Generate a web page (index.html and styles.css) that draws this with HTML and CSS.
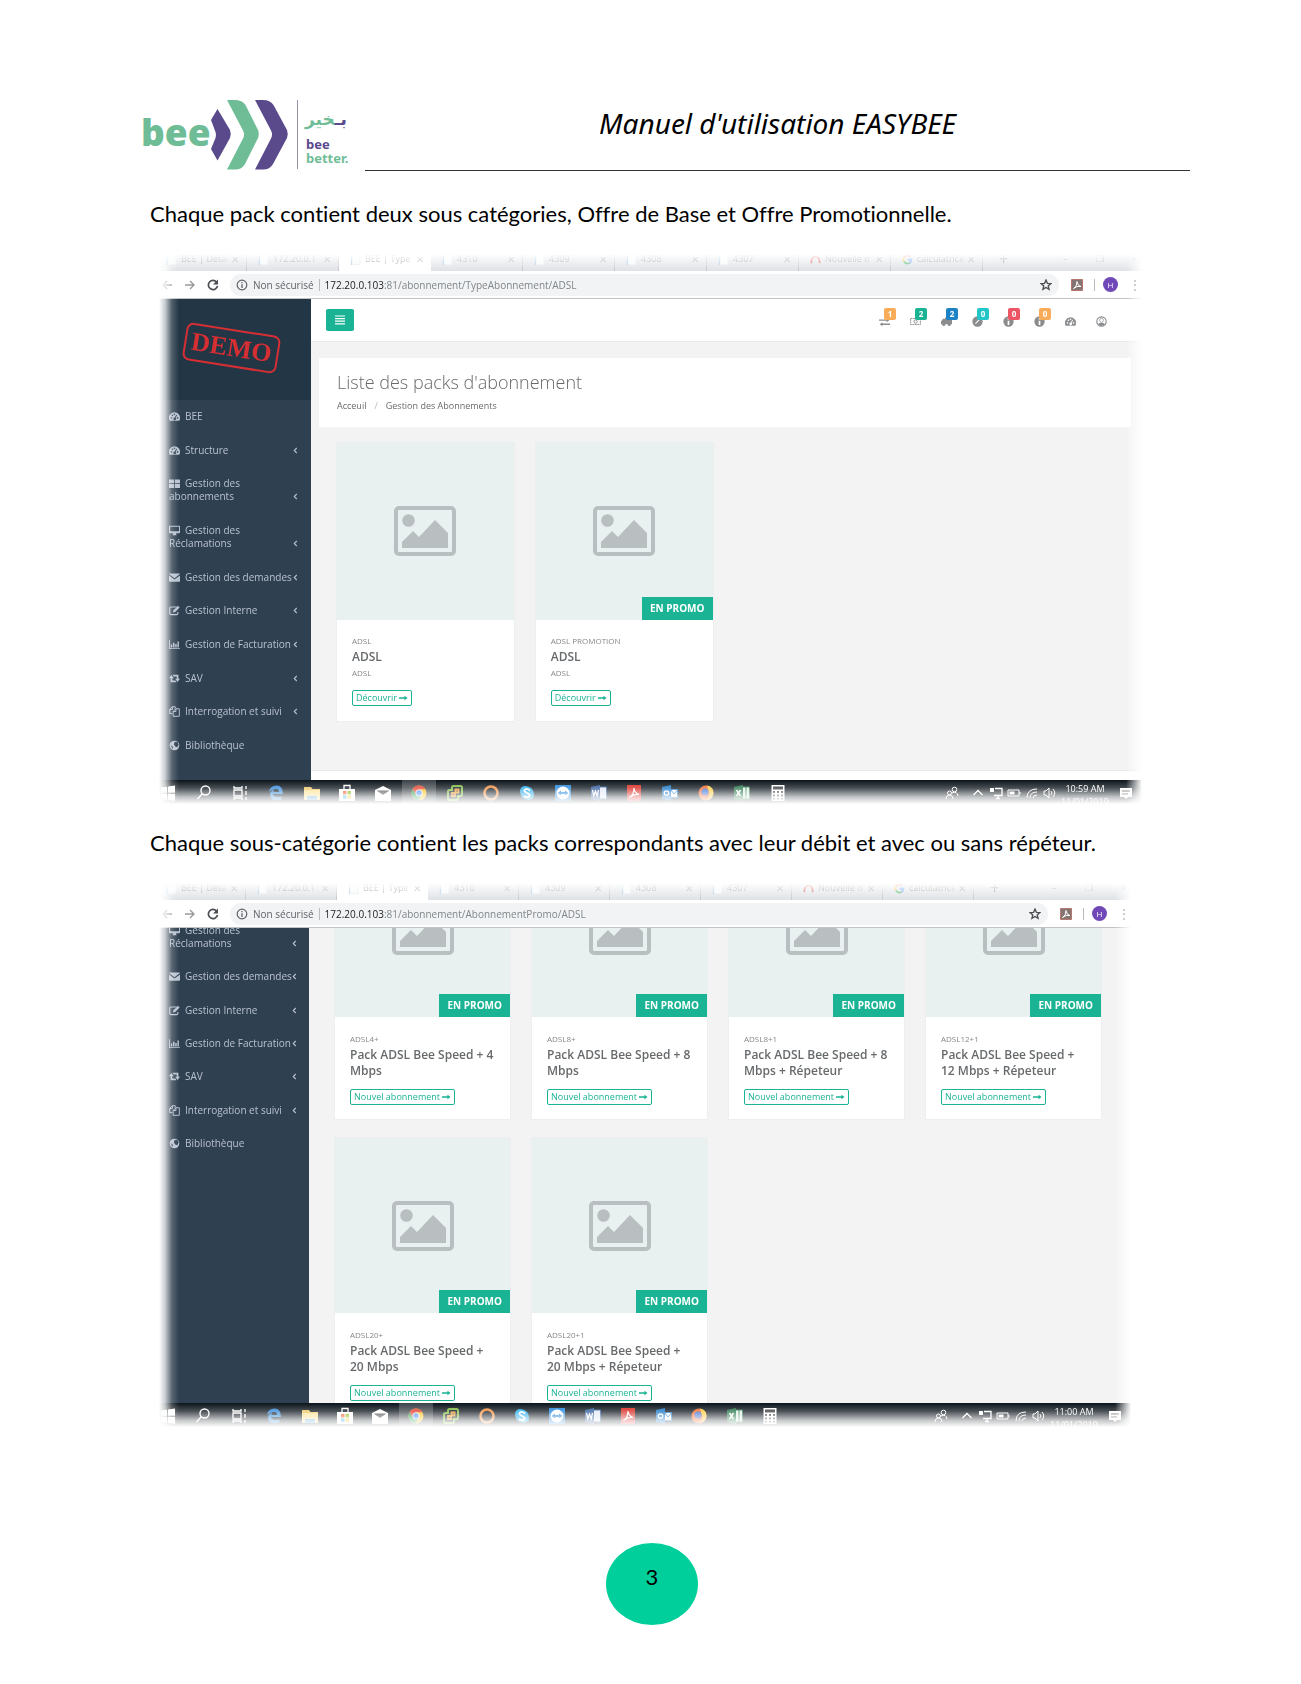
FILE: index.html
```html
<!DOCTYPE html>
<html lang="fr">
<head>
<meta charset="utf-8">
<title>Manuel d'utilisation EASYBEE</title>
<link rel="stylesheet" href="styles.css">
</head>
<body>
<svg class="sprite" aria-hidden="true">
  <symbol id="gauge" viewBox="0 0 16 16"><path fill="currentColor" d="M8 2a8 8 0 0 0-7 12h14A8 8 0 0 0 8 2z"/><g fill="var(--hole)"><circle cx="3.500" cy="10" r="1.200"/><circle cx="5" cy="6.300" r="1.200"/><circle cx="8" cy="4.800" r="1.200"/><circle cx="12.500" cy="10" r="1.200"/><path d="M10.800 5.500l1 .400L9.600 10a2 2 0 1 1-1.400-.400z"/></g></symbol>
  <symbol id="grid" viewBox="0 0 16 16"><path fill="currentColor" d="M0 2h7.400v5.600H0zM8.600 2H16v5.600H8.600zM0 8.800h7.400v5.600H0zM8.600 8.800H16v5.600H8.600z"/></symbol>
  <symbol id="desktop" viewBox="0 0 16 16"><path fill="currentColor" fill-rule="evenodd" d="M1 1h14q1 0 1 1v9q0 1-1 1h-5l1 3H5l1-3H1q-1 0-1-1V2q0-1 1-1zm.500 1.500v6.500h13V2.500z"/></symbol>
  <symbol id="mail" viewBox="0 0 16 16"><path fill="currentColor" d="M0 3q0-1 1-1h14q1 0 1 1L8 9zM0 5l8 6 8-6v8q0 1-1 1H1q-1 0-1-1z"/></symbol>
  <symbol id="edit" viewBox="0 0 16 16"><path fill="none" stroke="currentColor" stroke-width="1.600" d="M11 3H3Q1 3 1 5v7q0 2 2 2h8q2 0 2-2v-2"/><path fill="currentColor" d="M13 1l2.500 2.500L9 10l-3.500 1L6.500 7.500z"/></symbol>
  <symbol id="chart" viewBox="0 0 18 16"><path fill="currentColor" d="M0 1h1.400v13H18v1.400H0zM3 8h2.400v5H3zM6.600 5H9v8H6.600zM10.200 7h2.400v6h-2.400zM13.800 3h2.400v10h-2.400z"/></symbol>
  <symbol id="retweet" viewBox="0 0 16 16"><path fill="currentColor" d="M3.500 3l3.500 4.500H4.800V11h4.400l1.800 2.400H2.300V7.500H0zM5 2.600h8.700v5.900H16L12.500 13 9 8.500h2.200V5H6.800z"/></symbol>
  <symbol id="copy" viewBox="0 0 16 16"><g fill="none" stroke="currentColor" stroke-width="1.400"><path d="M5 11H1V5l4-4h4v3M5 1v4H1"/><path d="M10 4h5v11H6V8zM10 4v4H6"/></g></symbol>
  <symbol id="globe" viewBox="0 0 16 16"><circle cx="8" cy="8" r="7" fill="currentColor"/><path fill="var(--hole)" d="M8 3l4-.500 2 4-2 4-3-1-2-3zM2 7l4 3-1 3z"/></symbol>
  <symbol id="exchange" viewBox="0 0 16 16"><path fill="currentColor" d="M0 5h11V3l4 3-4 3V7H0zM16 11H5V9l-4 3 4 3v-2h11z"/></symbol>
  <symbol id="money" viewBox="0 0 18 16"><path fill="none" stroke="currentColor" stroke-width="1.600" stroke-dasharray="3 1" d="M1 3h16v10H1z"/><circle cx="9" cy="8" r="2.600" fill="none" stroke="currentColor" stroke-width="1.600"/></symbol>
  <symbol id="truck" viewBox="0 0 16 16"><path fill="currentColor" d="M6 2h10v10H0V8l3-4h3z"/><circle cx="4" cy="12.500" r="2.200" fill="currentColor"/><circle cx="12" cy="12.500" r="2.200" fill="currentColor"/></symbol>
  <symbol id="compass" viewBox="0 0 16 16"><circle cx="8" cy="8" r="7.500" fill="currentColor"/><path stroke="#fff" stroke-width="1.600" d="M5 11l6-6"/></symbol>
  <symbol id="info" viewBox="0 0 16 16"><circle cx="8" cy="8" r="7.500" fill="currentColor"/><path stroke="#fff" stroke-width="2.400" d="M8 3v2M8 7v6"/></symbol>
  <symbol id="user" viewBox="0 0 16 16"><circle cx="8" cy="8" r="6.800" fill="none" stroke="currentColor" stroke-width="1.600"/><circle cx="8" cy="6.200" r="2.800" fill="none" stroke="currentColor"/><path fill="currentColor" d="M3 12q2-3 5-2 3-1 5 2-5 5-10 0z"/></symbol>
  <symbol id="bars" viewBox="0 0 10 10"><path stroke="currentColor" stroke-width="1.200" d="M0 1h10M0 3.600h10M0 6.200h10M0 8.800h10"/></symbol>
  <symbol id="angle" viewBox="0 0 6 8"><path fill="none" stroke="currentColor" stroke-width="1.300" d="M4.500 1L1.500 4l3 3"/></symbol>
  <symbol id="arrow" viewBox="0 0 10 8"><path fill="currentColor" d="M0 3.300h6V1.500L9.500 4 6 6.500V4.700H0z"/></symbol>
  <symbol id="picture" viewBox="0 0 62 50"><rect x="2" y="2" width="58" height="46" rx="3" fill="none" stroke="#b9bfc0" stroke-width="4"/><circle cx="14.500" cy="14.500" r="6.300" fill="#b9bfc0"/><path fill="#b9bfc0" d="M8 42v-6l11-11 6 6 16-17 13 13v15z"/></symbol>
  <symbol id="back" viewBox="0 0 12 12"><path fill="none" stroke="#999" stroke-width="1.400" d="M11 6H2M6 2L2 6l4 4"/></symbol>
  <symbol id="forward" viewBox="0 0 12 12"><path fill="none" stroke="#999" stroke-width="1.400" d="M1 6h9M6 2l4 4-4 4"/></symbol>
  <symbol id="reload" viewBox="0 0 12 12"><path fill="none" stroke="#4a4d51" stroke-width="1.700" d="M9.800 3.400A4.600 4.600 0 1 0 10.500 7"/><path fill="#4a4d51" d="M11 .500v5H6z"/></symbol>
  <symbol id="notice" viewBox="0 0 12 12"><circle cx="6" cy="6" r="4.800" fill="none" stroke="#5f6368" stroke-width="1.200"/><path stroke="#5f6368" stroke-width="1.300" d="M6 3v1.300M6 5.300V9"/></symbol>
  <symbol id="star" viewBox="0 0 12 12"><path fill="none" stroke="#4a4d51" stroke-width="1.300" d="M6 1l1.400 3.300 3.500.300-2.700 2.300.900 3.500L6 8.500l-3.100 1.900.900-3.500L1.100 4.600l3.500-.300z"/></symbol>
  <symbol id="adobe" viewBox="0 0 12 12"><path fill="#857572" stroke="#b5786f" d="M.5.5h11v11H.5z"/><path fill="none" stroke="#fff" d="M2.500 9.500Q6 8 6 2.500 6.500 7 10 7.500 6 6.500 2.500 9.500z"/></symbol>
  <symbol id="file" viewBox="0 0 12 12"><path fill="#f4f6f8" stroke="#d5dade" d="M2 0h9v12H2z"/><path stroke="#7fb8e0" d="M1.500 2v10"/></symbol>
  <symbol id="arc" viewBox="0 0 12 12"><path fill="none" stroke="#d93025" stroke-width="1.800" d="M1.500 10Q1 3 6 3t4.500 7"/></symbol>
  <symbol id="google" viewBox="0 0 12 12"><g fill="none" stroke-width="2"><path stroke="#ea4335" d="M9 2.600Q4.500-.500 2 4"/><path stroke="#fbbc05" d="M2 4Q1 6 2 8"/><path stroke="#34a853" d="M2 8q2.500 4 6.500 1.600"/><path stroke="#4285f4" d="M8.500 9.600Q10 8 10.200 6H6"/></g></symbol>
  <symbol id="windows" viewBox="0 0 18 18"><path fill="#fff" d="M2 3.500l6-.8v6H2zM9 2.500l7-1v7.200H9zM2 9.700h6v6l-6-.8zM9 9.700h7V17l-7-1z"/></symbol>
  <symbol id="search" viewBox="0 0 18 18"><circle cx="10.500" cy="6.500" r="4.500" fill="none" stroke="#fff" stroke-width="1.400"/><path stroke="#fff" stroke-width="1.400" d="M7.300 9.700L2.500 15"/></symbol>
  <symbol id="tasks" viewBox="0 0 18 18"><path fill="none" stroke="#fff" stroke-width="1.300" d="M3 2v2h8V2M3 6h8v6H3zM3 16v-2h8v2M15 2v3M15 7v4M15 13v3"/></symbol>
  <symbol id="edge" viewBox="0 0 18 18"><path fill="#2f86d6" fill-rule="evenodd" d="M2 8Q3 1.500 9.500 1.500T16 10H6q1 4 8.500 2.500v3Q3 18.500 3 10q1-4 5-5-3 0-6 3zm4.500 0h5.500Q12 5 9 5T6.500 8z"/></symbol>
  <symbol id="folder" viewBox="0 0 18 18"><path fill="#e9c35c" d="M1 3h7l1.500 2H17v11H1z"/><path fill="#fbe08c" d="M1 6h16v10H1z"/><path fill="#4fa3dc" d="M4 12h10v4H4z"/></symbol>
  <symbol id="store" viewBox="0 0 18 18"><path fill="#fff" d="M1 5h16v12H1z"/><path fill="none" stroke="#fff" stroke-width="1.300" d="M6 5V1.500h6V5"/><path fill="#f25022" d="M5 7h3.500v3.500H5z"/><path fill="#7fba00" d="M9.500 7H13v3.500H9.500z"/><path fill="#00a4ef" d="M5 11.500h3.500V15H5z"/><path fill="#ffb900" d="M9.500 11.500H13V15H9.500z"/></symbol>
  <symbol id="letter" viewBox="0 0 18 18"><path fill="#fff" d="M1 6l8-4 8 4v11H1z"/><path fill="#444" d="M2.500 6.500h13L9 11z"/></symbol>
  <symbol id="chrome" viewBox="0 0 18 18"><circle cx="9" cy="9" r="7.500" fill="#fbc116"/><path fill="#e33b2e" d="M2.500 5.200a7.500 7.500 0 0 1 13 0H9L6 11z"/><path fill="#229a4c" d="M2.500 5.200A7.500 7.500 0 0 0 8.500 16.500L11.500 11H6z"/><circle cx="9" cy="9" r="3.500" fill="#fff"/><circle cx="9" cy="9" r="2.700" fill="#4285f4"/></symbol>
  <symbol id="vm" viewBox="0 0 18 18"><path fill="none" stroke="#79b83b" stroke-width="2" d="M6 6V3.500Q6 2 7.500 2h7Q16 2 16 3.500v7q0 1.500-1.500 1.500H12v2.500q0 1.500-1.500 1.500h-7Q2 16 2 14.500v-7Q2 6 3.500 6z"/><path fill="none" stroke="#e89a2b" stroke-width="1.800" d="M6 9h3v3H6zM9.500 5.500h3v3h-3z"/></symbol>
  <symbol id="ring" viewBox="0 0 18 18"><circle cx="9" cy="9" r="6.500" fill="none" stroke="#ee8b3a" stroke-width="2.600"/></symbol>
  <symbol id="skype" viewBox="0 0 18 18"><circle cx="7" cy="7" r="5" fill="#1ea9ea"/><circle cx="11" cy="11" r="5" fill="#1ea9ea"/><circle cx="9" cy="9" r="6.500" fill="#1ea9ea"/><path fill="none" stroke="#fff" stroke-width="1.800" d="M12 6.500Q9 4 7 5.500T9 9t2 3.500-5-.500"/></symbol>
  <symbol id="viewer" viewBox="0 0 18 18"><path fill="#1d83dc" d="M1 1h16v16H1z"/><circle cx="9" cy="9" r="6.500" fill="#fff"/><path fill="#1d83dc" d="M3.500 9L7 6.500V8h4V6.500L14.500 9 11 11.500V10H7v1.500z"/></symbol>
  <symbol id="word" viewBox="0 0 18 18"><path fill="#dfe7f5" stroke="#2b579a" d="M9 3h7.500v12H9z"/><path fill="#2b579a" d="M1 3l9-2v16l-9-2z"/><path fill="none" stroke="#fff" stroke-width="1.200" d="M2.500 6l1.300 6L5.500 7l1.700 5 1.300-6"/></symbol>
  <symbol id="pdf" viewBox="0 0 18 18"><path fill="#d9251d" d="M2 1h14v16H2z"/><path fill="none" stroke="#fff" stroke-width="1.200" d="M4.500 13.500Q9 11 9 4q.500 5 5 6.500-5-1-9.500 3z"/></symbol>
  <symbol id="outlook" viewBox="0 0 18 18"><path fill="#1272c4" d="M1 3l9-2v16l-9-2z"/><path fill="#fff" stroke="#1272c4" d="M9.500 5.500h7v8h-7z"/><path fill="none" stroke="#1272c4" d="M10 6l3 4 3.500-4"/><circle cx="5.500" cy="9" r="2.200" fill="none" stroke="#fff" stroke-width="1.300"/></symbol>
  <symbol id="firefox" viewBox="0 0 18 18"><circle cx="9" cy="9" r="7.500" fill="#f0642b"/><path fill="#fccb3b" d="M10 1.500Q17 3 16.500 9T9 16.500Q13 13 12 8z"/><circle cx="8" cy="8" r="3.500" fill="#3c6fd0"/></symbol>
  <symbol id="excel" viewBox="0 0 18 18"><path fill="#dff0e4" stroke="#217346" d="M9 3h7.500v12H9zM13 3v12"/><path fill="#217346" d="M1 3l9-2v16l-9-2z"/><path stroke="#fff" stroke-width="1.400" d="M3.500 6l4 6M7.500 6l-4 6"/></symbol>
  <symbol id="calc" viewBox="0 0 18 18"><path fill="#fff" d="M2.500 1h13v16h-13z"/><path fill="#333" d="M4 2.500h10v3H4zM4 7h2v2H4zM8 7h2v2H8zM12 7h2v2h-2zM4 10.500h2v2H4zM8 10.500h2v2H8zM12 10.500h2v2h-2zM4 14h2v1.500H4zM8 14h2v1.500H8zM12 14h2v1.500h-2z"/></symbol>
  <symbol id="people" viewBox="0 0 14 14"><g fill="none" stroke="#fff"><circle cx="9.500" cy="3.500" r="2.300"/><circle cx="4.500" cy="7" r="2"/><path d="M1 13q0-4 3.500-4T8 13M7 7q5-2.500 6 3"/></g></symbol>
  <symbol id="chevron" viewBox="0 0 14 14"><path fill="none" stroke="#fff" stroke-width="1.300" d="M2.500 9L7 4.500 11.500 9"/></symbol>
  <symbol id="screen" viewBox="0 0 14 14"><path fill="none" stroke="#fff" stroke-width="1.300" d="M6 2.500h7v7H5M9 9.500V13M7 12.500h4"/><path fill="#fff" d="M1 2h4v4H1z"/></symbol>
  <symbol id="battery" viewBox="0 0 14 14"><path fill="none" stroke="#fff" d="M1 4h11v6H1zM13 6v2"/><path fill="#fff" d="M2.500 5.500h5v3h-5z"/></symbol>
  <symbol id="wifi" viewBox="0 0 14 14"><path fill="none" stroke="#fff" d="M2 12Q2 3 12 3M5 12q0-6 7-6M8 12q0-3 4-3"/></symbol>
  <symbol id="sound" viewBox="0 0 14 14"><path fill="none" stroke="#fff" d="M1 5h2l3-3v10L3 9H1zM8 5q2 2 0 4M10 3q3.500 4 0 8"/></symbol>
  <symbol id="note" viewBox="0 0 14 14"><path fill="#fff" d="M1 2h12v9H9l-2 2-2-2H1z"/><path stroke="#444" d="M3 5h8M3 8h6"/></symbol>
</svg>

<div class="page">
  <header class="doc-header">
    <svg class="logo" viewBox="0 0 208 71" role="img" aria-label="bee, bee better">
      <text class="logo-word" x="-2" y="46">bee</text>
      <path fill="#5a4a8c" d="M74.500 9L87 30q1.500 4 0 8L74.500 60.500 68 49l4.500-11q1-3 0-6L68 20z"/>
      <path fill="#6fbd97" d="M84 0h8q7 0 10.500 5L115 30q1.500 4 0 8l-13 26q-3 5.500-10 5.500h-8l16-31q2-4 0-8z"/>
      <path fill="#5a4a8c" d="M112 0h8q7 0 10.500 5L144 30q1.500 4 0 8l-14 26q-3 5.500-10 5.500h-8l16-31q2-4 0-8z"/>
      <path stroke="#9592a8" d="M154.500 0v69"/>
      <text class="logo-arabic" x="204" y="25"><tspan fill="#5a4a8c">بـ</tspan><tspan fill="#6fbd97">خير</tspan></text>
      <text class="logo-tag" x="163" y="49" fill="#5a4a8c">bee</text>
      <text class="logo-tag" x="163" y="63" fill="#6fbd97">better.</text>
    </svg>
    <h1 class="doc-title">Manuel d'utilisation EASYBEE</h1>
  </header>

  <main>
    <p class="doc-text">Chaque pack contient deux sous catégories, Offre de Base et Offre Promotionnelle.</p>

    <section class="shot shot-types" aria-label="Liste des packs d'abonnement">
      <div class="tabs">
        <div class="tab"><svg><use href="#file"/></svg><span>BEE | Détai</span><b>×</b></div>
        <div class="tab"><svg><use href="#file"/></svg><span>172.20.0.1</span><b>×</b></div>
        <div class="tab active"><svg><use href="#file"/></svg><span>BEE | Type</span><b>×</b></div>
        <div class="tab"><svg><use href="#file"/></svg><span>4310</span><b>×</b></div>
        <div class="tab"><svg><use href="#file"/></svg><span>4309</span><b>×</b></div>
        <div class="tab"><svg><use href="#file"/></svg><span>4308</span><b>×</b></div>
        <div class="tab"><svg><use href="#file"/></svg><span>4307</span><b>×</b></div>
        <div class="tab"><svg><use href="#arc"/></svg><span>Nouvelle o</span><b>×</b></div>
        <div class="tab"><svg><use href="#google"/></svg><span>calculatrice</span><b>×</b></div>
        <div class="new-tab">+</div>
        <div class="window-keys"><span>–</span><span>❐</span><span>×</span></div>
      </div>
      <div class="toolbar">
        <svg><use href="#back"/></svg><svg><use href="#forward"/></svg><svg><use href="#reload"/></svg>
        <div class="address"><svg><use href="#notice"/></svg><span>Non sécurisé</span><i></i><span class="url"><strong>172.20.0.103</strong>:81/abonnement/TypeAbonnement/ADSL</span><svg class="fav"><use href="#star"/></svg></div>
        <svg class="ext"><use href="#adobe"/></svg><i></i><span class="avatar">H</span><span class="dots">⋮</span>
      </div>
      <div class="app">
        <nav class="sidebar">
          <div class="brand"><span class="stamp">DEMO</span></div>
          <div class="menu">
            <a href="#"><svg><use href="#gauge"/></svg>BEE</a>
            <a href="#"><svg><use href="#gauge"/></svg>Structure<svg class="angle"><use href="#angle"/></svg></a>
            <a href="#"><svg><use href="#grid"/></svg>Gestion des<br>abonnements<svg class="angle"><use href="#angle"/></svg></a>
            <a href="#"><svg><use href="#desktop"/></svg>Gestion des<br>Réclamations<svg class="angle"><use href="#angle"/></svg></a>
            <a href="#"><svg><use href="#mail"/></svg>Gestion des demandes<svg class="angle"><use href="#angle"/></svg></a>
            <a href="#"><svg><use href="#edit"/></svg>Gestion Interne<svg class="angle"><use href="#angle"/></svg></a>
            <a href="#"><svg><use href="#chart"/></svg>Gestion de Facturation<svg class="angle"><use href="#angle"/></svg></a>
            <a href="#"><svg><use href="#retweet"/></svg>SAV<svg class="angle"><use href="#angle"/></svg></a>
            <a href="#"><svg><use href="#copy"/></svg>Interrogation et suivi<svg class="angle"><use href="#angle"/></svg></a>
            <a href="#"><svg><use href="#globe"/></svg>Bibliothèque</a>
          </div>
        </nav>
        <div class="content">
          <div class="topbar">
            <button class="toggle" type="button" aria-label="Menu"><svg><use href="#bars"/></svg></button>
            <div class="alerts">
              <a href="#"><svg><use href="#exchange"/></svg><em class="orange">1</em></a>
              <a href="#"><svg><use href="#money"/></svg><em class="green">2</em></a>
              <a href="#"><svg><use href="#truck"/></svg><em class="blue">2</em></a>
              <a href="#"><svg><use href="#compass"/></svg><em class="cyan">0</em></a>
              <a href="#"><svg><use href="#info"/></svg><em class="red">0</em></a>
              <a href="#"><svg><use href="#info"/></svg><em class="orange">0</em></a>
              <a href="#"><svg><use href="#gauge"/></svg></a>
              <a href="#"><svg><use href="#user"/></svg></a>
            </div>
          </div>
          <div class="heading">
            <h2>Liste des packs d'abonnement</h2>
            <div class="crumbs"><a href="#">Acceuil</a><span>/</span><a href="#">Gestion des Abonnements</a></div>
          </div>
          <div class="cards">
            <article class="card">
              <div class="thumb"><svg><use href="#picture"/></svg></div>
              <div class="info"><small>ADSL</small><h3>ADSL</h3><p>ADSL</p><button type="button">Découvrir<svg><use href="#arrow"/></svg></button></div>
            </article>
            <article class="card">
              <div class="thumb"><svg><use href="#picture"/></svg><span class="promo">EN PROMO</span></div>
              <div class="info"><small>ADSL PROMOTION</small><h3>ADSL</h3><p>ADSL</p><button type="button">Découvrir<svg><use href="#arrow"/></svg></button></div>
            </article>
          </div>
          <div class="app-footer"></div>
        </div>
      </div>
      <div class="taskbar">
        <div class="apps">
          <svg><use href="#windows"/></svg><svg><use href="#search"/></svg><svg><use href="#tasks"/></svg><svg><use href="#edge"/></svg><svg><use href="#folder"/></svg><svg><use href="#store"/></svg><svg><use href="#letter"/></svg><svg class="current"><use href="#chrome"/></svg><svg><use href="#vm"/></svg><svg><use href="#ring"/></svg><svg><use href="#skype"/></svg><svg><use href="#viewer"/></svg><svg><use href="#word"/></svg><svg><use href="#pdf"/></svg><svg><use href="#outlook"/></svg><svg><use href="#firefox"/></svg><svg><use href="#excel"/></svg><svg><use href="#calc"/></svg>
        </div>
        <div class="tray"><svg><use href="#people"/></svg><svg><use href="#chevron"/></svg><svg><use href="#screen"/></svg><svg><use href="#battery"/></svg><svg><use href="#wifi"/></svg><svg><use href="#sound"/></svg></div>
        <div class="clock">10:59 AM<br>11/01/2019</div>
        <svg class="note"><use href="#note"/></svg>
      </div>
    </section>

    <p class="doc-text">Chaque sous-catégorie contient les packs correspondants avec leur débit et avec ou sans répéteur.</p>

    <section class="shot shot-promo" aria-label="Packs en promotion">
      <div class="tabs">
        <div class="tab"><svg><use href="#file"/></svg><span>BEE | Détai</span><b>×</b></div>
        <div class="tab"><svg><use href="#file"/></svg><span>172.20.0.1</span><b>×</b></div>
        <div class="tab active"><svg><use href="#file"/></svg><span>BEE | Type</span><b>×</b></div>
        <div class="tab"><svg><use href="#file"/></svg><span>4310</span><b>×</b></div>
        <div class="tab"><svg><use href="#file"/></svg><span>4309</span><b>×</b></div>
        <div class="tab"><svg><use href="#file"/></svg><span>4308</span><b>×</b></div>
        <div class="tab"><svg><use href="#file"/></svg><span>4307</span><b>×</b></div>
        <div class="tab"><svg><use href="#arc"/></svg><span>Nouvelle o</span><b>×</b></div>
        <div class="tab"><svg><use href="#google"/></svg><span>calculatrice</span><b>×</b></div>
        <div class="new-tab">+</div>
        <div class="window-keys"><span>–</span><span>❐</span><span>×</span></div>
      </div>
      <div class="toolbar">
        <svg><use href="#back"/></svg><svg><use href="#forward"/></svg><svg><use href="#reload"/></svg>
        <div class="address"><svg><use href="#notice"/></svg><span>Non sécurisé</span><i></i><span class="url"><strong>172.20.0.103</strong>:81/abonnement/AbonnementPromo/ADSL</span><svg class="fav"><use href="#star"/></svg></div>
        <svg class="ext"><use href="#adobe"/></svg><i></i><span class="avatar">H</span><span class="dots">⋮</span>
      </div>
      <div class="app">
        <nav class="sidebar">
          <div class="menu">
            <a href="#"><svg><use href="#desktop"/></svg>Gestion des<br>Réclamations<svg class="angle"><use href="#angle"/></svg></a>
            <a href="#"><svg><use href="#mail"/></svg>Gestion des demandes<svg class="angle"><use href="#angle"/></svg></a>
            <a href="#"><svg><use href="#edit"/></svg>Gestion Interne<svg class="angle"><use href="#angle"/></svg></a>
            <a href="#"><svg><use href="#chart"/></svg>Gestion de Facturation<svg class="angle"><use href="#angle"/></svg></a>
            <a href="#"><svg><use href="#retweet"/></svg>SAV<svg class="angle"><use href="#angle"/></svg></a>
            <a href="#"><svg><use href="#copy"/></svg>Interrogation et suivi<svg class="angle"><use href="#angle"/></svg></a>
            <a href="#"><svg><use href="#globe"/></svg>Bibliothèque</a>
          </div>
        </nav>
        <div class="content">
          <div class="cards">
            <article class="card">
              <div class="thumb"><svg><use href="#picture"/></svg><span class="promo">EN PROMO</span></div>
              <div class="info"><small>ADSL4+</small><h3>Pack ADSL Bee Speed + 4 Mbps</h3><button type="button">Nouvel abonnement<svg><use href="#arrow"/></svg></button></div>
            </article>
            <article class="card">
              <div class="thumb"><svg><use href="#picture"/></svg><span class="promo">EN PROMO</span></div>
              <div class="info"><small>ADSL8+</small><h3>Pack ADSL Bee Speed + 8 Mbps</h3><button type="button">Nouvel abonnement<svg><use href="#arrow"/></svg></button></div>
            </article>
            <article class="card">
              <div class="thumb"><svg><use href="#picture"/></svg><span class="promo">EN PROMO</span></div>
              <div class="info"><small>ADSL8+1</small><h3>Pack ADSL Bee Speed + 8 Mbps + Répeteur</h3><button type="button">Nouvel abonnement<svg><use href="#arrow"/></svg></button></div>
            </article>
            <article class="card">
              <div class="thumb"><svg><use href="#picture"/></svg><span class="promo">EN PROMO</span></div>
              <div class="info"><small>ADSL12+1</small><h3>Pack ADSL Bee Speed + 12 Mbps + Répeteur</h3><button type="button">Nouvel abonnement<svg><use href="#arrow"/></svg></button></div>
            </article>
            <article class="card">
              <div class="thumb"><svg><use href="#picture"/></svg><span class="promo">EN PROMO</span></div>
              <div class="info"><small>ADSL20+</small><h3>Pack ADSL Bee Speed + 20 Mbps</h3><button type="button">Nouvel abonnement<svg><use href="#arrow"/></svg></button></div>
            </article>
            <article class="card">
              <div class="thumb"><svg><use href="#picture"/></svg><span class="promo">EN PROMO</span></div>
              <div class="info"><small>ADSL20+1</small><h3>Pack ADSL Bee Speed + 20 Mbps + Répeteur</h3><button type="button">Nouvel abonnement<svg><use href="#arrow"/></svg></button></div>
            </article>
          </div>
        </div>
      </div>
      <div class="taskbar">
        <div class="apps">
          <svg><use href="#windows"/></svg><svg><use href="#search"/></svg><svg><use href="#tasks"/></svg><svg><use href="#edge"/></svg><svg><use href="#folder"/></svg><svg><use href="#store"/></svg><svg><use href="#letter"/></svg><svg class="current"><use href="#chrome"/></svg><svg><use href="#vm"/></svg><svg><use href="#ring"/></svg><svg><use href="#skype"/></svg><svg><use href="#viewer"/></svg><svg><use href="#word"/></svg><svg><use href="#pdf"/></svg><svg><use href="#outlook"/></svg><svg><use href="#firefox"/></svg><svg><use href="#excel"/></svg><svg><use href="#calc"/></svg>
        </div>
        <div class="tray"><svg><use href="#people"/></svg><svg><use href="#chevron"/></svg><svg><use href="#screen"/></svg><svg><use href="#battery"/></svg><svg><use href="#wifi"/></svg><svg><use href="#sound"/></svg></div>
        <div class="clock">11:00 AM<br>11/01/2019</div>
        <svg class="note"><use href="#note"/></svg>
      </div>
    </section>
  </main>

  <footer class="doc-footer"><span class="page-number">3</span></footer>
</div>
</body>
</html>
```
FILE: styles.css
```css
* { box-sizing: border-box; }
body { margin: 0; background: #fff; color: #000; font-family: Lato, sans-serif; font-variant-ligatures: none; }
h1, h2, h3, p { margin: 0; font-weight: 400; }
a { color: inherit; text-decoration: none; }
button { font: inherit; cursor: pointer; }
.sprite { display: none; }

/* Document page */
.page { padding: 100px 111px 59px 143px; }
.doc-header { display: flex; gap: 14px; height: 71px; }
.logo { flex: none; width: 208px; height: 71px; overflow: visible; }
.logo-word { font: 800 37px "Open Sans", sans-serif; fill: #6fbd97; }
.logo-arabic { font: 700 17px "DejaVu Sans", sans-serif; direction: rtl; }
.logo-tag { font: 700 13px "Noto Sans", sans-serif; }
.doc-title { flex: 1; border-bottom: 1px solid #333; font: italic 28px/46px "Noto Sans", sans-serif; text-align: center; }
.doc-text { padding-left: 7px; font-size: 22px; line-height: 28px; padding-bottom: 2px; }
.doc-header + main { padding-top: 29px; }
.doc-footer { display: flex; justify-content: center; padding: 114px 29px 0 0; }
.page-number { width: 92px; height: 82px; border-radius: 50%; background: #00cf9c; font-size: 22px; line-height: 67px; text-align: center; }

/* Captured window with feathered edges */
.shot {
  --hole: #2f4050;
  margin: 20px 44px 23px 12px;
  font-family: "Open Sans", sans-serif;
  background: #fff;
  mask-image:
    linear-gradient(to right, transparent 4px, rgb(0 0 0 / .25) 10px, rgb(0 0 0 / .8) 17px, #000 24px, #000 calc(100% - 20px), transparent calc(100% - 4px)),
    linear-gradient(to bottom, transparent 4px, #000 24px, #000 calc(100% - 26px), rgb(0 0 0 / .75) calc(100% - 18px), rgb(0 0 0 / .25) calc(100% - 9px), transparent calc(100% - 2px));
  mask-composite: intersect;
}
.shot-promo { margin: 20px 55px 0 12px; }

.tabs { display: flex; height: 21px; background: #d8dce1; font-size: 9px; line-height: 18px; color: #777; }
.tab { display: flex; align-items: center; gap: 4px; flex: none; width: 92px; height: 21px; padding: 0 7px 3px 11px; border-right: 1px solid #b8bcc2; }
.shot-promo .tab { width: 91px; }
.tab svg { flex: none; width: 11px; height: 11px; }
.tab span { flex: 1; min-width: 0; white-space: nowrap; mask-image: linear-gradient(to right, #000 85%, rgb(0 0 0 / .3)); }
.tab b, .new-tab { font-size: 13px; font-weight: 400; }
.tab.active { background: #fff; border: 0; border-radius: 6px 6px 0 0; }
.new-tab { padding-left: 16px; font-size: 16px; }
.window-keys { display: flex; justify-content: space-between; width: 74px; margin-left: auto; margin-right: 9px; }

.toolbar { display: flex; align-items: center; height: 28px; padding: 0 8px 0 6px; border-bottom: 1px solid #c0c2c4; font-size: 10px; color: #5f6368; }
.toolbar > svg { flex: none; width: 12px; height: 12px; margin-right: 11px; }
.toolbar i { width: 1px; height: 12px; margin: 0 5px; background: #bbb; }
.address { display: flex; align-items: center; flex: 1; height: 22px; padding: 0 7px 0 6px; border-radius: 11px; background: #f1f3f4; }
.address svg { width: 12px; height: 12px; margin-right: 5px; }
.address .fav { margin: 0 0 0 auto; }
.url { color: #80868b; }
.url strong { font-weight: 400; color: #222; }
.toolbar > .ext { margin: 0 6px 0 12px; }
.avatar { width: 15px; height: 15px; margin-left: 3px; border-radius: 50%; background: #7048b8; color: #fff; font-size: 8px; line-height: 15px; text-align: center; }
.dots { width: 10px; margin-left: 10px; text-align: center; font-size: 14px; }

/* Application */
.app { display: flex; height: 481px; overflow: hidden; background: #f3f3f4; }
.shot-promo .app { height: 475px; }
.sidebar { display: flex; flex-direction: column; flex: none; width: 156px; background: #2f4050; color: #b9c2d0; font-size: 10px; font-weight: 500; line-height: 13px; }
.shot-promo .sidebar { width: 154px; }
.brand { display: flex; align-items: center; justify-content: center; height: 101px; padding: 0 4px 3px 0; background: #233646; }
.stamp { padding: 0 5px; border: 2px solid #d62f33; border-radius: 7px; color: #d62f33; font: 700 26px/34px "Liberation Serif", serif; transform: rotate(9deg); }
.menu { display: flex; flex: 1; flex-direction: column; justify-content: space-between; padding: 10px 13px 28px 14px; }
.shot-promo .menu { flex: none; height: 226px; padding: 0 12px 0 14px; margin-top: -4px; }
.menu a { position: relative; white-space: nowrap; }
.menu a > svg:first-child { width: 11px; height: 11px; margin-right: 5px; vertical-align: -2px; }
.menu .angle { position: absolute; right: 0; bottom: 3px; width: 5px; height: 7px; }

.content { display: flex; flex: 1; flex-direction: column; min-width: 0; }
.topbar { display: flex; justify-content: space-between; height: 43px; padding: 10px 29px 0 15px; background: #fff; border-bottom: 1px solid #e7eaec; }
.toggle { display: flex; align-items: center; justify-content: center; width: 28px; height: 22px; padding: 0; border: 0; border-radius: 2px; background: #1ab394; color: #fff; }
.toggle svg { width: 10px; height: 10px; }
.alerts { --hole: #fff; display: flex; color: #8a8c8e; }
.alerts a { position: relative; width: 31px; height: 22px; padding: 7px 10px 0; }
.alerts svg { display: block; width: 11px; height: 11px; }
.alerts em { position: absolute; top: -1px; left: 15px; width: 12px; height: 12px; border-radius: 2px; color: #fff; font-size: 8px; font-style: normal; font-weight: 700; line-height: 12px; text-align: center; }
.orange { background: #f8ac59; }
.green { background: #1ab394; }
.blue { background: #1c84c6; }
.cyan { background: #23c6c8; }
.red { background: #ed5565; }
.heading { height: 69px; margin: 16px 15px 0 8px; padding: 12px 18px; background: #fff; color: #676a6c; }
.heading h2 { font-size: 18px; font-weight: 300; line-height: 24px; }
.crumbs { display: flex; gap: 8px; font-size: 9px; line-height: 24px; }
.crumbs span { color: #bbb; }

.cards { display: grid; grid-template-columns: repeat(4, minmax(0, 1fr)); gap: 19px 22px; padding: 16px 36px 0 26px; }
.shot-promo .cards { margin-top: -86px; padding: 0 34px 0 26px; }
.card { background: #fff; box-shadow: 0 0 0 1px #eceef0; }
.thumb { position: relative; display: flex; align-items: center; justify-content: center; aspect-ratio: 1; background: #e8f0f0; }
.thumb svg { width: 62px; height: 50px; }
.promo { position: absolute; right: 0; bottom: 0; padding: 0 8px; background: #1ab394; color: #fff; font-size: 10px; font-weight: 700; line-height: 23px; }
.info { display: flex; flex-direction: column; align-items: flex-start; height: 102px; padding: 17px 10px 0 15px; color: #676a6c; }
.info small { color: #888; font-size: 8px; line-height: 10px; }
.info h3 { margin: 3px 0 10px; font-size: 12px; font-weight: 600; line-height: 16px; }
.info p { margin: -4px 0 11px; color: #888; font-size: 8px; line-height: 12px; }
.shot-types .info { height: 101px; padding-top: 16px; }
.shot-types .info h3 { margin-bottom: 6px; }
.info button { display: flex; align-items: center; gap: 2px; height: 16px; padding: 0 3px; border: 1px solid #1ab394; border-radius: 2px; background: #fff; color: #1ab394; font-size: 9px; line-height: 14px; }
.info button svg { width: 9px; height: 8px; }
.app-footer { height: 10px; margin-top: auto; background: #fff; border-top: 1px solid #e7eaec; }

.taskbar { display: flex; height: 26px; background: #0b141b; color: #fff; font-size: 9px; line-height: 13px; }
.apps { display: flex; flex: none; width: 636px; justify-content: space-between; }
.shot-promo .apps { width: 628px; }
.apps svg { flex: none; width: 26px; height: 18px; margin-top: 4px; }
.apps .current { width: 34px; height: 26px; margin: 0 -4px; padding: 4px 0; background: #3b4248; }
.tray { display: flex; gap: 4px; margin-left: auto; padding-top: 6px; }
.tray svg { width: 14px; height: 14px; }
.tray svg:first-child { margin-right: 8px; }
.clock { width: 56px; padding-top: 2px; text-align: center; }
.note { width: 14px; height: 14px; margin: 6px 13px 0 6px; }
```
